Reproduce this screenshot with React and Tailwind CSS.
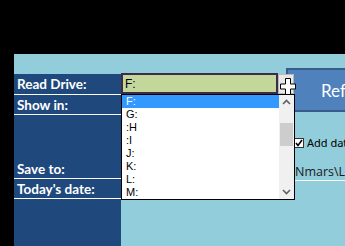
import React from "react";

const drives = ["F:", "G:", ":H", ":I", "J:", "K:", "L:", "M:"];

function Chevron({ down }) {
  return (
    <svg width="9" height="6" viewBox="0 0 9 6" className="block">
      <path
        d={down ? "M1 1 L4.5 4.5 L8 1" : "M1 5 L4.5 1.5 L8 5"}
        fill="none"
        stroke="#606060"
        strokeWidth="1.6"
      />
    </svg>
  );
}

function Label({ children, h }) {
  return (
    <div
      className={`${h} border-b border-white flex items-center pl-[3px] pt-[2px] text-white font-bold text-[13.5px] leading-none whitespace-nowrap`}
      style={{ fontFamily: "Lato, 'Liberation Sans', sans-serif" }}
    >
      {children}
    </div>
  );
}

export default function App() {
  return (
    <div className="relative w-[345px] h-[246px] bg-black overflow-hidden flex flex-col">
      <div className="h-[54px] shrink-0" />
      <div className="flex flex-1">
        <div className="w-[14px] shrink-0" />
        <div className="flex-1 bg-[#92CDDC] flex overflow-hidden">
          {/* label column */}
          <div className="mt-[20px] w-[107px] shrink-0 bg-[#1F497D] flex flex-col">
            <Label h="h-[21px]">Read Drive:</Label>
            <Label h="h-[20px]">Show in:</Label>
            <div className="h-[44px]" />
            <Label h="h-[20px]">Save to:</Label>
            <Label h="h-[20px]">Today's date:</Label>
          </div>

          {/* sheet content on the right */}
          <div className="flex-1 pl-[165px] flex flex-col">
            <div className="mt-[14px] h-[44px] w-[80px] border-2 border-[#385D8A] bg-[#4F81BD] flex items-center pl-[33px]">
              <span
                className="text-white text-[17px] leading-none"
                style={{ fontFamily: "Lato, 'Open Sans', sans-serif" }}
              >
                Ref
              </span>
            </div>
            <div
              className="mt-[25px] pl-[8px] flex items-center gap-[2px] text-[11px] leading-none text-black"
              style={{ fontFamily: "'Noto Sans', sans-serif" }}
            >
              <div className="w-[10px] h-[10px] bg-white border border-[#333] flex items-center justify-center">
                <svg width="8" height="8" viewBox="0 0 8 8">
                  <path d="M1 4 L3 6.5 L7 1" fill="none" stroke="#000" strokeWidth="1.6" />
                </svg>
              </div>
              <span className="ml-[1px] whitespace-nowrap">Add dat</span>
            </div>
            <div
              className="mt-[16px] h-[17px] border-b border-white pl-[9px] text-[12.5px] leading-[16px] text-[#1a1a1a] whitespace-nowrap"
              style={{ fontFamily: "'Open Sans', sans-serif" }}
            >
              Nmars\L
            </div>
          </div>
        </div>
      </div>

      {/* open combo box */}
      <div
        className="absolute left-[121px] top-[73px] w-[157px] h-[21px] border-2 border-[#3D2B48] bg-[#C4D79B] flex items-center pl-[2px] text-[12px] leading-none text-black"
        style={{ fontFamily: "'Liberation Sans', sans-serif" }}
      >
        F:
      </div>
      <div className="absolute left-[278px] top-[74px] w-[16px] h-[20px] bg-[#E8E8E8] border border-[#B8B8B8]" />

      <div
        className="absolute left-[121px] top-[94px] w-[174px] h-[106px] bg-white border border-black flex text-[11px] text-black"
        style={{ fontFamily: "'Liberation Sans', sans-serif" }}
      >
        <div className="flex-1 flex flex-col">
          {drives.map((d, i) => (
            <div
              key={d}
              className={`h-[13px] flex items-center leading-none pl-[4px] ${i === 0 ? "bg-[#3399FF] text-white" : ""}`}
            >
              {d}
            </div>
          ))}
        </div>
        <div className="w-[15px] bg-[#F0F0F0] flex flex-col items-center">
          <div className="h-[14px] flex items-center justify-center">
            <Chevron />
          </div>
          <div className="mt-[14px] w-[13px] h-[23px] bg-[#CDCDCD]" />
          <div className="flex-1" />
          <div className="h-[14px] flex items-center justify-center">
            <Chevron down />
          </div>
        </div>
      </div>

      {/* mouse cursor */}
      <svg className="absolute left-[280px] top-[78px]" width="16" height="17" viewBox="0 0 16 17">
        <path
          d="M5.5 0.5 H10.5 V6 H15.5 V11 H10.5 V16.5 H5.5 V11 H0.5 V6 H5.5 Z"
          fill="#fff"
          stroke="#000"
          strokeWidth="1"
        />
      </svg>
    </div>
  );
}
